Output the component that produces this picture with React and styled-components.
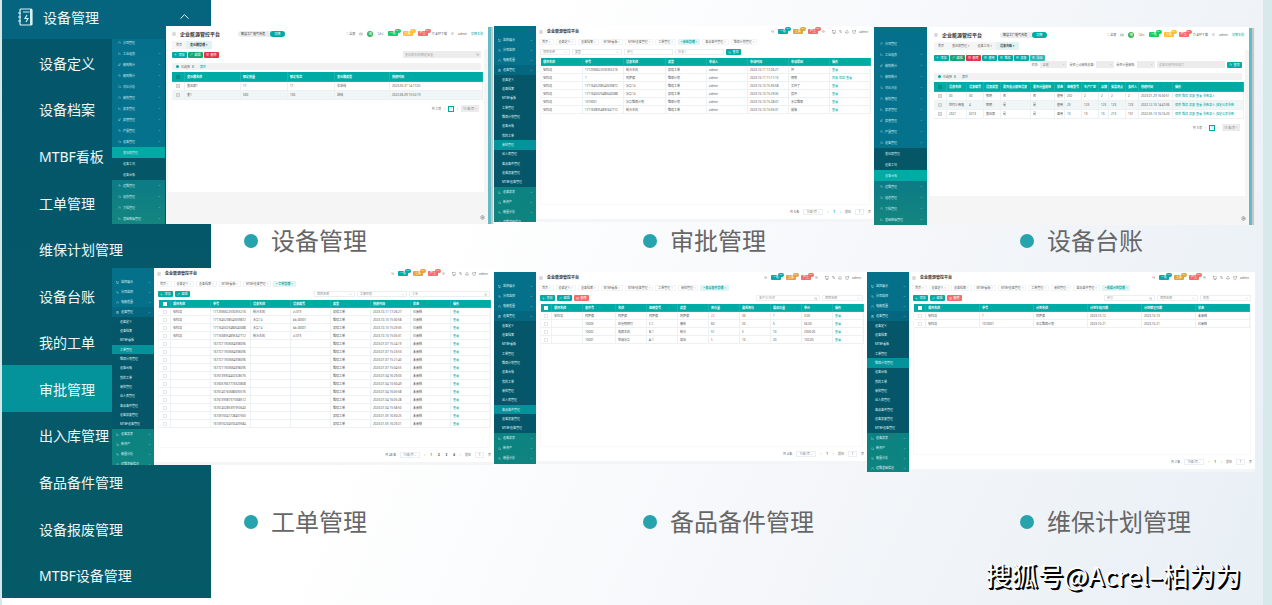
import styled, { createGlobalStyle, css } from "styled-components";
import {
  Activity,
  Bell,
  ChevronDown,
  ChevronUp,
  ClipboardList,
  Cloud,
  Gauge,
  Languages,
  Leaf,
  LineChart,
  Menu as MenuIcon,
  Monitor,
  Pencil,
  Plus,
  Search,
  Settings,
  Shirt,
  Trash2,
  Volume2,
} from "lucide-react";

const theme = {
  teal: "#00aaa5",
  dark: "#055669",
  active: "#04939a",
  text: "#666",
  line: "#eef1f3",
};

const menuItems = [
  "设备定义",
  "设备档案",
  "MTBF看板",
  "工单管理",
  "维保计划管理",
  "设备台账",
  "我的工单",
  "审批管理",
  "出入库管理",
  "备品备件管理",
  "设备报废管理",
  "MTBF设备管理",
];

const modernTop = [
  [Monitor, "监控展示"],
  [Activity, "分项监控"],
  [Gauge, "电能质量"],
  [ClipboardList, "设备管理"],
];
const modernBottom = [
  [LineChart, "设备报表"],
  [Cloud, "新资产"],
  [Activity, "能量分析"],
  [Gauge, "运维基础信息"],
];

const classicMenu = [
  "分项管理",
  "工业组态",
  "能耗统计",
  "能耗统计",
  "对比分析",
  "能效管理",
  "报表管理",
  "报警管理",
  "产量管理",
  "设备管理",
  "变压器管理",
  "设备工况",
  "设备台账",
  "运维管理",
  "组态管理",
  "文档管理",
  "基础数据管理",
];
const classicIcons = [Gauge, LineChart, Leaf, Activity, Cloud];

const modernTabs = [
  "首页",
  "设备定义",
  "设备档案",
  "MTBF看板",
  "MTBF设备管理",
  "工单管理",
  "审批管理",
  "备品备件管理",
  "维保计划管理",
];

const look = ["查看"];

const approvals = {
  cols: [42, 41, 42, 41, 41, 41, 41, 41],
  head: ["项目名称", "单号", "设备名称", "类型", "申请人", "申请时间", "申请原因", "操作"],
  rows: [
    ["安科瑞", "1712936622592355216", "制冷主机", "报修工单", "admin", "2023-10-11 17:26:27", "坏", look],
    ["安科瑞", "1", "阿萨德", "维保计划", "admin", "2023-10-11 11:11:15", "啊啊", ["同意", "驳回", "查看"]],
    ["安科瑞", "1711645238542639872", "水泵1#", "维修工单", "admin", "2023-10-10 15:30:58", "又坏了", look],
    ["安科瑞", "1711645029480640088", "水泵1#", "报修工单", "admin", "2023-10-10 15:29:35", "损坏", look],
    ["安科瑞", "1010001", "水泵维保计划", "维保计划", "admin", "2023-10-10 15:28:37", "水泵维保", look],
    ["安科瑞", "1711638954895347712", "制冷主机", "维修工单", "admin", "2023-10-10 15:05:31", "故障", look],
  ],
};

const orders = {
  check: true,
  cols: [12, 40, 40, 40, 40, 40, 40, 40, 40],
  head: ["项目名称", "单号", "设备名称", "设备编号", "类型", "创建时间", "状态", "操作"],
  rows: [
    ["安科瑞", "1712936622592355216", "制冷主机", "zl-019", "报修工单", "2023-10-11 17:26:27", "已审核", look],
    ["安科瑞", "1711645238542639872", "水泵1#", "bb-00001", "维修工单", "2023-10-10 15:30:58", "已审核", look],
    ["安科瑞", "1711645029480640088", "水泵1#", "bb-00001", "报修工单", "2023-10-10 15:29:35", "已审核", look],
    ["安科瑞", "1711638954895347712", "制冷主机", "zl-019", "维修工单", "2023-10-10 15:05:31", "已审核", look],
    ["", "1677211903664398096", "", "", "维修工单", "2023-07-07 15:24:19", "未审核", look],
    ["", "1677211903664398096", "", "", "维修工单", "2023-07-07 15:23:53", "未审核", look],
    ["", "1677211903664398096", "", "", "维修工单", "2023-07-07 15:21:40", "未审核", look],
    ["", "1677211903664398096", "", "", "维修工单", "2023-07-07 15:04:55", "未审核", look],
    ["", "1676139904402328576", "", "", "维修工单", "2023-07-04 16:29:03", "未审核", look],
    ["", "1676057667773320808", "", "", "维修工单", "2023-07-04 10:30:49", "未审核", look],
    ["", "1676140160686690576", "", "", "维修工单", "2023-07-04 16:05:58", "未审核", look],
    ["", "1676139981971668512", "", "", "维修工单", "2023-07-04 16:05:28", "未审核", look],
    ["", "1676140285391950640", "", "", "维修工单", "2023-07-04 15:58:50", "未审核", look],
    ["", "1610916041728407560", "", "", "报修工单", "2023-01-05 16:30:25", "未审核", look],
    ["", "1610916204592409584", "", "", "报修工单", "2023-01-05 16:29:21", "未审核", look],
  ],
};

const parts = {
  check: true,
  cols: [11, 31, 33, 31, 31, 31, 31, 31, 31, 31, 31],
  head: ["项目名称", "备件号", "名称", "规格型号", "类型", "库存量", "最低库存", "最高存量", "单价", "操作"],
  warn: 5,
  rows: [
    ["安科瑞", "阿萨德", "阿萨德", "阿萨德", "阿萨德", "22", "33", "1", "3.00", look],
    ["", "10003", "应急照明灯", "C-1", "楼体", "60", "20", "5", "56.00", look],
    ["", "10002", "电器主机", "B-1", "制冷", "51", "5", "10", "2300.00", look],
    ["", "10001", "空调水泵", "A-1", "高压", "5", "10", "20", "150.00", look],
  ],
};

const plans = {
  check: true,
  cols: [12, 54, 54, 54, 54, 54, 54],
  head: ["项目名称", "单号", "计划名称", "计划生效日期", "计划截至日期", "状态"],
  rows: [
    ["安科瑞", "1", "阿萨德", "2023-10-12", "2023-10-13", "未审核"],
    ["安科瑞", "1010001", "水泵维保计划", "2023-10-21", "2023-10-21", "已审核"],
  ],
};

const transformers = {
  check: true,
  cols: [13, 56, 47, 47, 55, 93],
  head: ["变压器名称", "额定容量", "额定电流", "变压器类型", "创建时间"],
  rows: [
    ["变压器1", "11", "11", "非进线", "2023-05-31 14:17:02"],
    ["变1", "500", "100", "进线", "2022-06-09 15:52:19"],
  ],
};

const actions = ["保养", "维修", "报废", "查看", "参数录入"];
const ledger = {
  check: true,
  cols: [13, 20, 17, 17, 30, 24, 10, 17, 17, 10, 17, 13, 34, 71],
  head: [
    "设备名称",
    "设备编号",
    "设备类型",
    "是否重点能耗设备",
    "是否计量能耗",
    "状态",
    "规格型号",
    "生产厂家",
    "品牌",
    "安装地点",
    "责任人",
    "创建时间",
    "操作",
  ],
  rows: [
    ["00", "00", "照明", "否", "否", "使用", "232", "2", "2", "2", "2", "2023-01-29 16:00:51", actions],
    ["空间三母电", "4", "照明", "是", "是", "使用", "23", "123", "123", "123", "123", "2022-12-10 14:47:06", [...actions, "绑定仪表参数"]],
    ["2321", "3213", "变压器", "是", "是", "备用", "13", "13", "13", "213", "131", "2022-05-13 16:16:20", [...actions, "绑定仪表参数"]],
  ],
};

const DataTable = ({ data, roomy }) => (
  <TableStyle $roomy={roomy}>
    <colgroup>
      {data.cols.map((w, i) => (
        <Column key={i} $width={w} />
      ))}
    </colgroup>
    <thead>
      <tr>
        {data.check && (
          <th>
            <Check type="checkbox" aria-label="全选" $roomy={roomy} />
          </th>
        )}
        {data.head.map((name) => (
          <th key={name}>{name}</th>
        ))}
      </tr>
    </thead>
    <tbody>
      {data.rows.map((row, r) => (
        <tr key={r}>
          {data.check && (
            <td>
              <Check type="checkbox" aria-label={`选择第${r + 1}行`} $roomy={roomy} />
            </td>
          )}
          {row.map((cell, c) => (
            <Cell key={c} $warn={data.warn === c && Number(cell) < 50}>
              {Array.isArray(cell)
                ? cell.map((a) => (
                    <RowLink key={a} href="#">
                      {a}
                    </RowLink>
                  ))
                : cell}
            </Cell>
          ))}
        </tr>
      ))}
    </tbody>
  </TableStyle>
);

const icons = { 添加: Plus, 编辑: Pencil, 删除: Trash2, 查询: Search };
const tones = { 删除: "#f56c6c" };

const ActionButton = ({ name, tone }) => {
  const Icon = icons[name] || ClipboardList;
  return (
    <SmallButton $tone={tone || tones[name]}>
      <Icon size={3} />
      {name}
    </SmallButton>
  );
};

const Field = ({ kind, label, width, filled }) =>
  kind === "select" ? (
    <FieldBox $width={width} $filled={filled}>
      <select aria-label={label}>
        <option>{label}</option>
      </select>
      <ChevronDown size={3} />
    </FieldBox>
  ) : (
    <FieldBox $width={width} $filled={filled}>
      <input aria-label={label} placeholder={label} />
      {kind === "search" && <Search size={3} />}
    </FieldBox>
  );

const Alerts = ({ bright }) => (
  <AlertGroup>
    <Alert $tone={bright ? "#13ce66" : theme.teal}>
      一般<i>99+</i>
    </Alert>
    <Alert $tone={bright ? "#ffc12f" : "#e6a23c"}>
      重要<i>99+</i>
    </Alert>
    <Alert $tone="#f56c6c">
      严重<i>99+</i>
    </Alert>
  </AlertGroup>
);

const ModernScreen = ({ height, active, tabs, buttons, fields, data, total, pages }) => (
  <Screen $height={height}>
    <ModernSide>
      {modernTop.map(([Icon, name], i) => (
        <SideItem key={name} $open={i === 3}>
          <Icon size={3} />
          <span>{name}</span>
          {i === 3 ? <ChevronUp size={3} /> : <ChevronDown size={3} />}
        </SideItem>
      ))}
      <SubMenu>
        {menuItems.map((name) => (
          <SubItem key={name} $active={name === active}>
            {name}
          </SubItem>
        ))}
      </SubMenu>
      {modernBottom.map(([Icon, name]) => (
        <SideItem key={name}>
          <Icon size={3} />
          <span>{name}</span>
          <ChevronDown size={3} />
        </SideItem>
      ))}
    </ModernSide>
    <ModernMain>
      <ModernHeader>
        <MenuIcon size={4} />
        <h3>企业能源管控平台</h3>
        <Search size={3} />
        <Alerts />
        <Volume2 size={3} />
        <IconGroup>
          <Monitor size={4} />
          <Languages size={3} />
          <Bell size={4} />
          <Shirt size={4} />
          <span>admin</span>
        </IconGroup>
      </ModernHeader>
      <ModernTabs>
        {modernTabs.slice(0, tabs).map((name) => (
          <ModernTab key={name} $active={name === active}>
            {name === active && "• "}
            {name} <small>×</small>
          </ModernTab>
        ))}
      </ModernTabs>
      <Toolbar>
        {buttons.map((name) => (
          <ActionButton key={name} name={name} />
        ))}
        {buttons.length > 0 && <Push />}
        {fields.map((f) => (
          <Field key={f.label} {...f} />
        ))}
        {buttons.length === 0 && <ActionButton name="查询" />}
      </Toolbar>
      <TableBox>
        <DataTable data={data} />
      </TableBox>
      <Pager>
        <span>共 {total} 条</span>
        <Field kind="select" label="15条/页" width={20} />
        <span>‹</span>
        {pages.map((n) => (
          <PageNumber key={n} $current={n === 1}>
            {n}
          </PageNumber>
        ))}
        <span>›</span>
        <span>前往</span>
        <PageInput aria-label="页码" defaultValue="1" />
        <span>页</span>
      </Pager>
    </ModernMain>
  </Screen>
);

const ClassicScreen = ({ active, tabs, seeThrough, offset, data, children, total, panel }) => (
  <Screen $height={198} $offset={offset}>
    <ClassicSide $seeThrough={seeThrough}>
      {classicMenu.map((name, i) => {
        const Icon = classicIcons[i % 5];
        const sub = i > 9 && i < 13;
        return (
          <ClassicItem key={i} $sub={sub} $active={name === active}>
            {!sub && <Icon size={3} />}
            <span>{name}</span>
            {!sub && i > 0 && (i === 9 ? <ChevronUp size={3} /> : <ChevronDown size={3} />)}
          </ClassicItem>
        );
      })}
    </ClassicSide>
    <ClassicMain>
      <ClassicHeader>
        <MenuIcon size={4} />
        <h3>企业能源管控平台</h3>
        <Plant>
          <span>智慧工厂电气改造</span>
          <button>切换</button>
        </Plant>
        <Push />
        <span>⛶ 全屏</span>
        <Volume2 size={4} />
        <Weather>晴</Weather>
        <span>14℃</span>
        <Alerts bright />
        <span>▦ APP下载</span>
        <Bell size={3} />
        <span>admin</span>
        <RowLink href="#">切换主题</RowLink>
      </ClassicHeader>
      <ClassicTabs>
        {tabs.map((name) => (
          <ClassicTab key={name} $active={name === active}>
            {name}
            {name !== "首页" && " ×"}
          </ClassicTab>
        ))}
      </ClassicTabs>
      <Panel $height={panel} $top={offset ? 4 : 2}>
        {children}
        <Notice>
          <i />
          已选择 <b>0</b>
          <RowLink href="#">清空</RowLink>
        </Notice>
        <DataTable data={data} roomy />
        <ClassicPager>
          <span>共 {total} 项</span>
          <span>‹</span>
          <BoxedPage>1</BoxedPage>
          <span>›</span>
          <Field kind="select" label="15 条/页" width={18} filled />
        </ClassicPager>
      </Panel>
      <Gear>
        <Settings size={5} />
      </Gear>
    </ClassicMain>
    <ScrollTrack />
  </Screen>
);

const Shot = ({ name, indent, children }) => (
  <Figure>
    <div>{children}</div>
    <Caption $indent={indent}>{name}</Caption>
  </Figure>
);

const App = () => (
  <>
    <GlobalStyle />
    <Page>
      <BigMenu aria-label="设备管理">
        <MenuHeader>
          <svg width="15" height="18" viewBox="0 0 15 18" fill="none" stroke="#d8f0f5" strokeWidth="1.2">
            <rect x="2" y="1" width="12" height="16" rx="1" />
            <path d="M5 4h6.500M0 5h3M0 9h3M0 13h3" />
            <path d="M9 7l-2 3.500h3l-2 3.500" />
            <path d="M13 1v16" strokeWidth="2" />
          </svg>
          <span>设备管理</span>
          <ChevronUp size={15} strokeWidth={1.5} />
        </MenuHeader>
        {menuItems.map((name) => (
          <MenuItem key={name} href="#" $active={name === "审批管理"}>
            {name}
          </MenuItem>
        ))}
      </BigMenu>

      <Gallery>
        <TopRow>
          <Shot name="设备管理" indent={132}>
            <ClassicScreen
              seeThrough
              active="变压器管理"
              tabs={["首页", "变压器管理"]}
              data={transformers}
              total={2}
              panel={143}
            >
              <ClassicTools>
                <ActionButton name="添加" />
                <ActionButton name="编辑" tone="#17a673" />
                <ActionButton name="删除" tone="#e0344a" />
                <Push />
                <Field kind="search" label="变压器名称/额定容量" width={78} filled />
              </ClassicTools>
            </ClassicScreen>
          </Shot>
          <Shot name="审批管理" indent={149}>
            <ModernScreen
              height={196}
              active="审批管理"
              tabs={9}
              buttons={[]}
              fields={[
                { kind: "select", label: "项目名称", width: 30 },
                { kind: "select", label: "类型", width: 50 },
                { label: "单号", width: 49 },
                { label: "申请人", width: 49 },
              ]}
              data={approvals}
              total={6}
              pages={[1]}
            />
          </Shot>
          <Shot name="设备台账" indent={146}>
            <ClassicScreen
              offset={1}
              active="设备台账"
              tabs={["首页", "变压器管理", "设备工况", "设备台账"]}
              data={ledger}
              total={3}
              panel={146}
            >
              <ClassicTools>
                <ActionButton name="添加" />
                <ActionButton name="编辑" tone="#17a673" />
                <ActionButton name="删除" tone="#e0344a" />
                <ActionButton name="使用" />
                <ActionButton name="维修" />
                <ActionButton name="报废" />
                <ActionButton name="导出" tone="#2fb8b6" />
              </ClassicTools>
              <FilterRow>
                <span>状态:</span>
                <Field kind="select" label="全部" width={27} filled />
                <span>是否重点能耗设备:</span>
                <Field kind="select" label=" " width={18} filled />
                <span>是否计量能耗:</span>
                <Field kind="select" label="  " width={18} filled />
                <Field label="设备名称/所在部门" width={68} filled />
                <ActionButton name="查询" />
              </FilterRow>
            </ClassicScreen>
          </Shot>
        </TopRow>

        <BottomRow>
          <Shot name="工单管理" indent={132}>
            <ModernScreen
              height={197}
              active="工单管理"
              tabs={6}
              buttons={["添加", "编辑"]}
              fields={[
                { kind: "select", label: "项目名称", width: 41 },
                { kind: "select", label: "工单状态", width: 50 },
                { kind: "search", label: "工单", width: 81 },
              ]}
              data={orders}
              total={48}
              pages={[1, 2, 3, 4]}
            />
          </Shot>
          <Shot name="备品备件管理" indent={149}>
            <Lowered>
              <ModernScreen
                height={192}
                active="备品备件管理"
                tabs={8}
                buttons={["添加", "编辑", "删除"]}
                fields={[
                  { kind: "search", label: "备件号/名称", width: 64 },
                  { kind: "select", label: "项目名称", width: 41 },
                ]}
                data={parts}
                total={4}
                pages={[1]}
              />
            </Lowered>
          </Shot>
          <Shot name="维保计划管理" indent={153}>
            <Lowered>
              <ModernScreen
                height={200}
                active="维保计划管理"
                tabs={9}
                buttons={["添加", "编辑", "删除"]}
                fields={[
                  { kind: "search", label: "单号", width: 51 },
                  { kind: "select", label: "项目名称", width: 41 },
                  { kind: "select", label: "状态", width: 51 },
                ]}
                data={plans}
                total={2}
                pages={[1]}
              />
            </Lowered>
          </Shot>
        </BottomRow>
      </Gallery>
      <Signature>搜狐号@Acrel–柏为为</Signature>
    </Page>
  </>
);

export default App;

const GlobalStyle = createGlobalStyle`
  * {
    box-sizing: border-box;
  }
  body {
    margin: 0;
    font-family: "Noto Sans", "Noto Sans CJK SC", sans-serif;
  }
  button, input, select {
    font: inherit;
    color: inherit;
    border: 0;
    margin: 0;
    padding: 0;
    background: none;
  }
  h3 {
    margin: 0;
  }
  a {
    text-decoration: none;
  }
  svg {
    flex: none;
  }
`;

const Page = styled.div`
  display: grid;
  min-height: 100vh;
  border-left: 2px solid #d3e8e8;
  border-right: 9px solid #d7e9ea;
  background: linear-gradient(115deg, #ffffff 35%, #f5f7fa 65%, #e8eff5 100%);
`;

const BigMenu = styled.nav`
  grid-area: 1 / 1;
  display: flex;
  flex-direction: column;
  width: 209px;
  margin-bottom: 7px;
  background: linear-gradient(#04566b, #055a67);
  font-size: 14px;
  color: #eef8f9;
`;

const MenuHeader = styled.button`
  display: flex;
  align-items: center;
  gap: 10px;
  height: 39px;
  padding: 0 19px 6px 16px;
  background: #05657f;
  text-align: left;

  span {
    flex: 1;
  }
`;

const MenuItem = styled.a`
  flex: 1;
  display: flex;
  align-items: center;
  padding-top: 1px;
  padding-left: 37px;
  color: #eef8f9;
  background: ${({ $active }) => ($active ? theme.active : "transparent")};
`;

const Gallery = styled.main`
  grid-area: 1 / 1;
  display: flex;
  flex-direction: column;
  min-width: 0;
  padding: 26px 8px 0 110px;
  pointer-events: none;
`;

const TopRow = styled.div`
  display: grid;
  grid-template-columns: minmax(0, 382fr) minmax(0, 380fr) minmax(0, 381fr);
  grid-template-rows: minmax(242px, auto);
`;

const BottomRow = styled.div`
  display: grid;
  grid-template-columns: minmax(0, 382fr) minmax(0, 373fr) minmax(0, 388fr);
  grid-template-rows: minmax(281px, auto);
`;

const Figure = styled.figure`
  display: flex;
  flex-direction: column;
  justify-content: space-between;
  margin: 0;
`;

const Lowered = styled.div`
  padding-top: 4px;
`;

const Caption = styled.figcaption`
  display: flex;
  align-items: center;
  gap: 13px;
  height: 32px;
  margin-bottom: 11px;
  padding-left: ${({ $indent }) => $indent}px;
  font-size: 24px;
  line-height: 32px;
  color: ${theme.text};
  white-space: nowrap;

  &::before {
    content: "";
    width: 14px;
    height: 14px;
    border-radius: 50%;
    background: #26a3ad;
  }
`;

const Screen = styled.div`
  display: flex;
  height: ${({ $height }) => $height}px;
  margin-top: ${({ $offset }) => $offset || 0}px;
  overflow: hidden;
  font-size: 3px;
  line-height: 4px;
  color: ${theme.text};
`;

const ModernSide = styled.aside`
  flex: none;
  width: 42px;
  padding-top: 9px;
  overflow: hidden;
  background: linear-gradient(#05708a, #05708a 30%, #0c8380 85%, #0f8480);
  color: #dff1f3;
`;

const SideItem = styled.button`
  display: flex;
  align-items: center;
  gap: 2px;
  width: 100%;
  height: 10px;
  padding: 0 3px 0 4px;
  text-align: left;
  background: ${({ $open }) => ($open ? "#05667f" : "transparent")};

  span {
    flex: 1;
    white-space: nowrap;
  }
`;

const SubMenu = styled.div`
  display: grid;
  grid-auto-rows: 1fr;
  height: 112px;
  background: ${theme.dark};
`;

const SubItem = styled.button`
  padding-left: 8px;
  text-align: left;
  background: ${({ $active }) => ($active ? theme.active : "transparent")};
`;

const ModernMain = styled.section`
  flex: 1;
  display: flex;
  flex-direction: column;
  min-width: 0;
  padding: 0 3px;
  border-bottom: 3px solid #f3f5f6;
  background: #fff;
`;

const ModernHeader = styled.header`
  display: flex;
  align-items: center;
  gap: 4px;
  height: 11px;
  padding-right: 3px;

  h3 {
    flex: 1;
    font-size: 4px;
    color: #333;
  }
`;

const AlertGroup = styled.div`
  display: flex;
  gap: 5px;
`;

const Alert = styled.span`
  position: relative;
  width: 10px;
  height: 5px;
  border-radius: 1px;
  background: ${({ $tone }) => $tone};
  color: #fff;
  text-align: center;

  i {
    position: absolute;
    top: -2px;
    right: -3px;
    width: 6px;
    height: 4px;
    border-radius: 2px;
    background: ${({ $tone }) => $tone};
    font-size: 2px;
    font-style: normal;
  }
`;

const IconGroup = styled.div`
  display: flex;
  align-items: center;
  gap: 3px;
  margin-left: 3px;
`;

const ModernTabs = styled.div`
  display: flex;
  align-items: center;
  gap: 2px;
  height: 9px;
`;

const ModernTab = styled.button`
  height: 6px;
  padding: 0 2px;
  border: 1px solid #f2f4f5;
  line-height: 4px;
  white-space: nowrap;

  small {
    font-size: 3px;
    color: #aaa;
  }

  ${({ $active }) =>
    $active &&
    css`
      border-color: #e0f5f4;
      background: #e0f5f4;
      color: ${theme.teal};
      font-weight: 700;
    `}
`;

const Toolbar = styled.div`
  display: flex;
  align-items: center;
  gap: 2px;
  height: 12px;
  padding: 0 1px;
`;

const Push = styled.div`
  flex: 1;
`;

const SmallButton = styled.button`
  display: inline-flex;
  align-items: center;
  justify-content: center;
  gap: 1px;
  flex: none;
  width: 15px;
  height: 6px;
  border-radius: 1px;
  background: ${({ $tone }) => $tone || theme.teal};
  color: #fff;
  line-height: 4px;
`;

const FieldBox = styled.div`
  display: flex;
  align-items: center;
  flex: 0 1 ${({ $width }) => $width}px;
  min-width: 0;
  height: ${({ $filled }) => ($filled ? 7 : 6)}px;
  padding: 0 2px;
  border: ${({ $filled }) => ($filled ? "0" : "1px solid #eceff1")};
  background: ${({ $filled }) => ($filled ? "#ececec" : "#fff")};
  color: #888;

  input,
  select {
    flex: 1;
    min-width: 0;
    width: 100%;
    height: 4px;
    line-height: 4px;
    appearance: none;
    outline: none;
  }
  input::placeholder {
    color: #aaa;
  }
`;

const TableBox = styled.div`
  flex: 1;
  min-height: 0;
  margin: 0 1px;
  border: 1px solid #f7f8f9;
  border-top: 0;
`;

const Column = styled.col`
  width: ${({ $width }) => $width}px;
`;

const TableStyle = styled.table`
  width: 100%;
  table-layout: fixed;
  border-collapse: separate;
  border-spacing: 0;

  th,
  td {
    height: ${({ $roomy }) => ($roomy ? 9 : 8)}px;
    padding: 0 2px;
    border-bottom: 1px solid ${theme.line};
    border-right: 1px solid ${theme.line};
    line-height: 4px;
    text-align: left;
    vertical-align: middle;
    white-space: nowrap;
  }
  th {
    height: ${({ $roomy }) => ($roomy ? 10 : 8)}px;
    border-color: #1ab3ae;
    background: ${theme.teal};
    color: #fff;
    font-weight: 700;
  }
  td {
    color: #555;
  }
  tbody tr:nth-child(even) {
    background: ${({ $roomy }) => ($roomy ? "#f0f6f6" : "transparent")};
  }
  th:first-child:has(input),
  td:first-child:has(input) {
    text-align: center;
    font-size: 0;
  }
`;

const Cell = styled.td`
  && {
    color: ${({ $warn }) => ($warn ? "#ff4d4f" : "#555")};
  }
`;

const Check = styled.input`
  appearance: none;
  width: 4px;
  height: 4px;
  vertical-align: middle;

  td & {
    border: 1px solid ${({ $roomy }) => ($roomy ? "#cfcfcf" : "#e6e8ea")};
    background: ${({ $roomy }) => ($roomy ? "#e2e2e2" : "#fff")};
  }
  th & {
    background: ${({ $roomy }) => ($roomy ? "#058f8b" : "#fff")};
  }
`;

const RowLink = styled.a`
  margin-right: 1px;
  color: ${theme.teal};
`;

const Pager = styled.div`
  display: flex;
  align-items: center;
  justify-content: flex-end;
  gap: 4px;
  height: 14px;
`;

const PageNumber = styled.button`
  padding: 0 1px;
  font-weight: 700;
  color: ${({ $current }) => ($current ? theme.teal : "#444")};
`;

const PageInput = styled.input`
  width: 9px;
  height: 6px;
  border: 1px solid #eceff1;
  line-height: 4px;
  text-align: center;
`;

const ClassicSide = styled.aside`
  flex: none;
  width: 53px;
  padding-top: 11px;
  overflow: hidden;
  background: ${({ $seeThrough }) =>
    $seeThrough
      ? "linear-gradient(transparent 13px, #05708c 13px, #05728c 60%, #14867f)"
      : "linear-gradient(#05708c, #05728c 60%, #14867f)"};
  color: #cfe8ee;
`;

const ClassicItem = styled.button`
  display: flex;
  align-items: center;
  gap: 2px;
  width: 100%;
  height: 11px;
  padding: 0 4px 0 ${({ $sub }) => ($sub ? 11 : 6)}px;
  text-align: left;
  background: ${({ $sub, $active }) => ($active ? theme.teal : $sub ? "#055768" : "transparent")};

  span {
    flex: 1;
  }
`;

const ClassicMain = styled.section`
  flex: 1;
  display: flex;
  flex-direction: column;
  min-width: 0;
  margin-left: 1px;
  background: #f5f5f5;
`;

const ClassicHeader = styled.header`
  display: flex;
  align-items: center;
  gap: 4px;
  height: 15px;
  padding: 0 4px 0 6px;
  background: #fff;
  white-space: nowrap;

  h3 {
    font-size: 5px;
    color: #333;
  }
`;

const Plant = styled.div`
  display: flex;
  align-items: center;
  gap: 5px;
  height: 6px;
  margin-left: 14px;
  padding-left: 3px;
  border-radius: 3px;
  background: #ececec;
  color: #333;

  button {
    width: 15px;
    height: 6px;
    border-radius: 3px;
    background: ${theme.teal};
    color: #fff;
    line-height: 4px;
  }
`;

const Weather = styled.span`
  width: 6px;
  height: 6px;
  border-radius: 50%;
  background: #35b558;
  color: #fff;
  line-height: 6px;
  text-align: center;
`;

const ClassicTabs = styled.div`
  display: flex;
  height: 8px;
  padding-left: 6px;
  background: #fff;
`;

const ClassicTab = styled.button`
  height: 8px;
  padding: 0 4px;
  background: ${({ $active }) => ($active ? "#dff3f2" : "#f5f5f5")};
  color: ${({ $active }) => ($active ? "#333" : theme.text)};
  font-weight: ${({ $active }) => ($active ? 700 : 400)};
  line-height: 4px;
`;

const Panel = styled.div`
  min-height: ${({ $height }) => $height}px;
  margin: 0 4px 0 2px;
  padding: ${({ $top }) => $top}px 3px 0 4px;
  background: #fff;
`;

const ClassicTools = styled.div`
  display: flex;
  align-items: center;
  gap: 1px;
  height: 7px;
`;

const FilterRow = styled.div`
  display: flex;
  align-items: center;
  justify-content: flex-end;
  gap: 2px;
  height: 7px;
  white-space: nowrap;
`;

const Notice = styled.div`
  display: flex;
  align-items: center;
  gap: 2px;
  height: 7px;
  margin: 5px 0 2px;
  padding-left: 4px;
  background: #f2f2f2;

  i {
    width: 3px;
    height: 3px;
    border-radius: 50%;
    background: ${theme.teal};
  }
  b {
    margin-right: 4px;
    color: ${theme.teal};
  }
`;

const ClassicPager = styled.div`
  display: flex;
  align-items: center;
  justify-content: flex-end;
  gap: 3px;
  height: 7px;
  margin-top: 5px;
  padding-right: 2px;
`;

const BoxedPage = styled.button`
  width: 6px;
  height: 6px;
  border: 1px solid ${theme.teal};
  color: ${theme.teal};
  line-height: 4px;
`;

const Gear = styled.div`
  display: flex;
  flex: 1;
  align-items: flex-end;
  justify-content: flex-end;
  padding: 0 3px 4px 0;
`;

const ScrollTrack = styled.div`
  width: 6px;
  margin-top: 1px;
  border-left: 3px solid #62bcc6;
  border-right: 1px solid #eee;
  background: #c4c8ca;
`;

const Signature = styled.p`
  grid-area: 1 / 1;
  align-self: end;
  justify-self: end;
  margin: 0 22px 12px 0;
  font-family: "Noto Sans CJK SC", sans-serif;
  font-size: 26px;
  line-height: 36px;
  color: #fff;
  text-shadow: 1px 1px 0 #000, 2px 2px 0 #000;
`;
